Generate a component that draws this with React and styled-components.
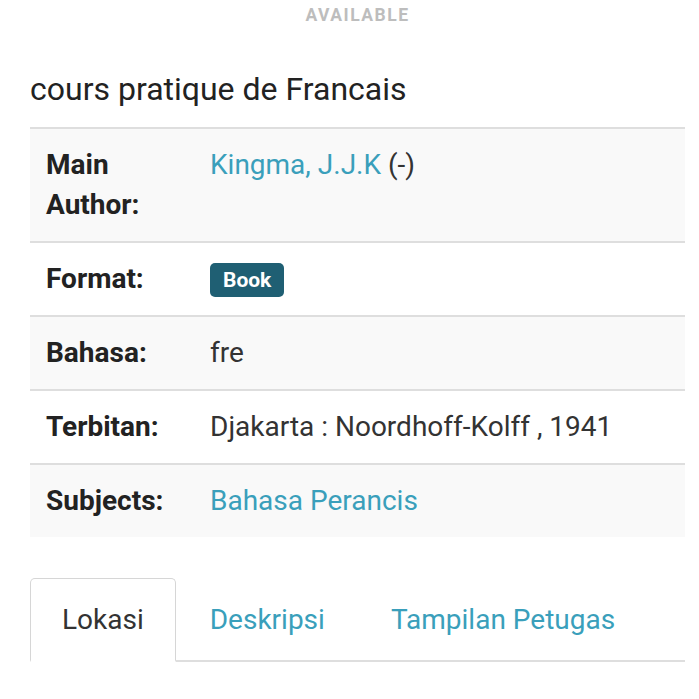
import React from "react";
import styled, { createGlobalStyle } from "styled-components";

const Global = createGlobalStyle`
  html, body { margin: 0; padding: 0; background: #fff; }
  body { font-family: Roboto, "Noto Sans", sans-serif; color: #333; }
`;

const Page = styled.div`
  width: 699px;
  height: 699px;
  overflow: hidden;
  padding: 0 14px 0 30px;
  box-sizing: border-box;
`;

const Status = styled.div`
  width: 655px;
  text-align: center;
  padding-top: 6px;
  font-size: 17.5px;
  font-weight: 700;
  letter-spacing: 1.5px;
  color: #bdbdbd;
  line-height: 18px;
`;

const Title = styled.h1`
  margin: 46px 0 0;
  font-size: 32px;
  font-weight: 400;
  line-height: 38px;
  color: #222;
`;

const Table = styled.div`
  margin-top: 19px;
  width: 655px;
  border-top: 2px solid #dedede;
`;

const Row = styled.div`
  display: grid;
  grid-template-columns: 164px 1fr;
  padding: 16px 16px;
  background: ${(p) => (p.$striped ? "#f9f9f9" : "#fff")};
  border-top: ${(p) => (p.$first ? "none" : "2px solid #dedede")};
  font-size: 28px;
  line-height: 40px;
`;

const Label = styled.div`
  font-weight: 700;
  color: #222;
  padding-right: 12px;
`;

const Value = styled.div`
  color: #333;
`;

const Link = styled.a`
  color: #3a9fbb;
  text-decoration: none;
`;

const Badge = styled.span`
  display: inline-block;
  background: #1f5f73;
  color: #fff;
  font-size: 21px;
  font-weight: 700;
  line-height: 34px;
  padding: 0 13px;
  border-radius: 5px;
  vertical-align: middle;
  position: relative;
  top: -1px;
`;

const Tabs = styled.div`
  margin-top: 41px;
  width: 655px;
  display: flex;
  border-bottom: 2px solid #dedede;
`;

const Tab = styled.div`
  padding: 0 31px;
  margin-right: 2px;
  margin-bottom: -2px;
  height: 84px;
  display: flex;
  align-items: center;
  font-size: 28px;
  box-sizing: border-box;
  color: ${(p) => (p.$active ? "#333" : "#3a9fbb")};
  border: 1px solid ${(p) => (p.$active ? "#d6d6d6" : "transparent")};
  border-bottom: 2px solid ${(p) => (p.$active ? "#fff" : "transparent")};
  border-radius: 5px 5px 0 0;
  background: ${(p) => (p.$active ? "#fff" : "transparent")};
`;

export default function App() {
  return (
    <Page>
      <Global />
      <Status>AVAILABLE</Status>
      <Title>cours pratique de Francais</Title>
      <Table>
        <Row $striped $first>
          <Label>Main Author:</Label>
          <Value>
            <Link href="#">Kingma, J.J.K</Link> (-)
          </Value>
        </Row>
        <Row>
          <Label>Format:</Label>
          <Value>
            <Badge>Book</Badge>
          </Value>
        </Row>
        <Row $striped>
          <Label>Bahasa:</Label>
          <Value>fre</Value>
        </Row>
        <Row>
          <Label>Terbitan:</Label>
          <Value>Djakarta : Noordhoff-Kolff , 1941</Value>
        </Row>
        <Row $striped>
          <Label>Subjects:</Label>
          <Value>
            <Link href="#">Bahasa Perancis</Link>
          </Value>
        </Row>
      </Table>
      <Tabs>
        <Tab $active>Lokasi</Tab>
        <Tab>Deskripsi</Tab>
        <Tab>Tampilan Petugas</Tab>
      </Tabs>
    </Page>
  );
}
